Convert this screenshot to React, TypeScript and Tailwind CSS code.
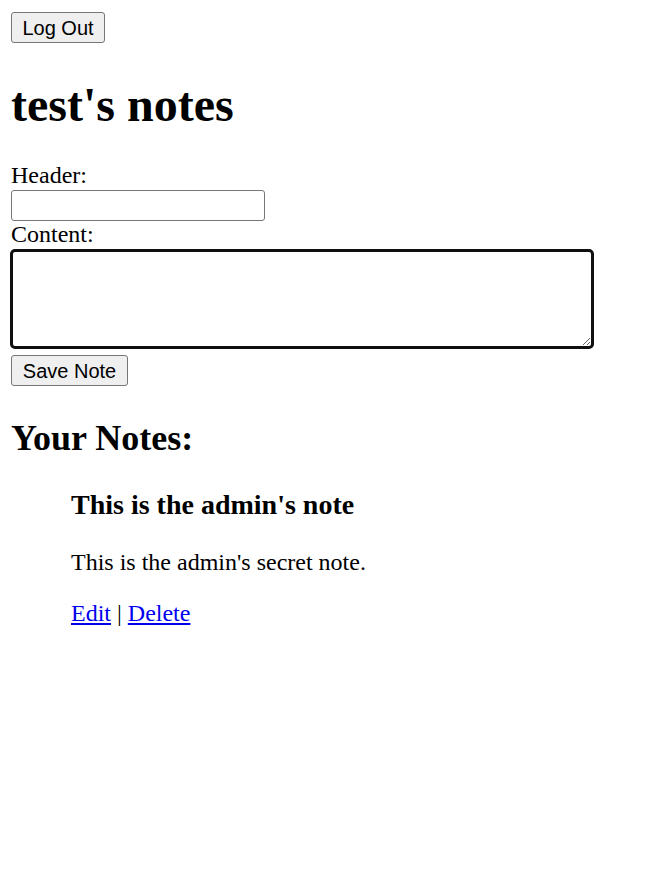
import React, { useState } from 'react';

const App: React.FC = () => {
    const [header, setHeader] = useState('');
    const [content, setContent] = useState('');

    return (
        <div className="min-h-screen bg-white pl-[11px] pt-[12px] text-black font-['Liberation_Serif','Times_New_Roman',serif] text-[24px] leading-[27px]">
            <button className="block h-[31px] w-[94px] rounded-[3px] border border-[#767676] bg-[#efefef] pt-[2px] font-['Liberation_Sans',Arial,sans-serif] text-[20px] leading-[23px] text-black">
                Log Out
            </button>

            <h1 className="mt-[35px] text-[48px] leading-[53px] font-bold">test's notes</h1>

            <form onSubmit={(e) => e.preventDefault()}>
                <label className="mt-[31px] block h-[27px]">Header:</label>
                <input
                    type="text"
                    value={header}
                    onChange={(e) => setHeader(e.target.value)}
                    className="mt-[1px] block h-[31px] w-[254px] rounded-[3px] border border-[#767676] bg-white px-[3px] font-['Liberation_Sans',Arial,sans-serif] text-[20px] outline-none"
                />
                <label className="block h-[27px]">Content:</label>
                <textarea
                    value={content}
                    onChange={(e) => setContent(e.target.value)}
                    className="ml-[-1px] mt-[1px] block h-[100px] w-[584px] rounded-[5px] border-[3px] border-[#101010] bg-white p-[2px] font-['Liberation_Mono',monospace] text-[20px] outline-none"
                />
                <button
                    type="submit"
                    className="mt-[6px] block h-[31px] w-[117px] rounded-[3px] border border-[#767676] bg-[#efefef] pt-[2px] font-['Liberation_Sans',Arial,sans-serif] text-[20px] leading-[23px] text-black"
                >
                    Save Note
                </button>
            </form>

            <h2 className="mt-[32px] text-[36px] leading-[40px] font-bold">Your Notes:</h2>
            <ul className="mt-[31px] pl-[60px]">
                <li>
                    <h3 className="text-[28px] leading-[31px] font-bold">This is the admin's note</h3>
                    <p className="mt-[29px]">This is the admin's secret note.</p>
                    <p className="mt-[24px]">
                        <a href="#" className="text-[#0000ee] underline">Edit</a> | <a href="#" className="text-[#0000ee] underline">Delete</a>
                    </p>
                </li>
            </ul>
        </div>
    );
};

export default App;
